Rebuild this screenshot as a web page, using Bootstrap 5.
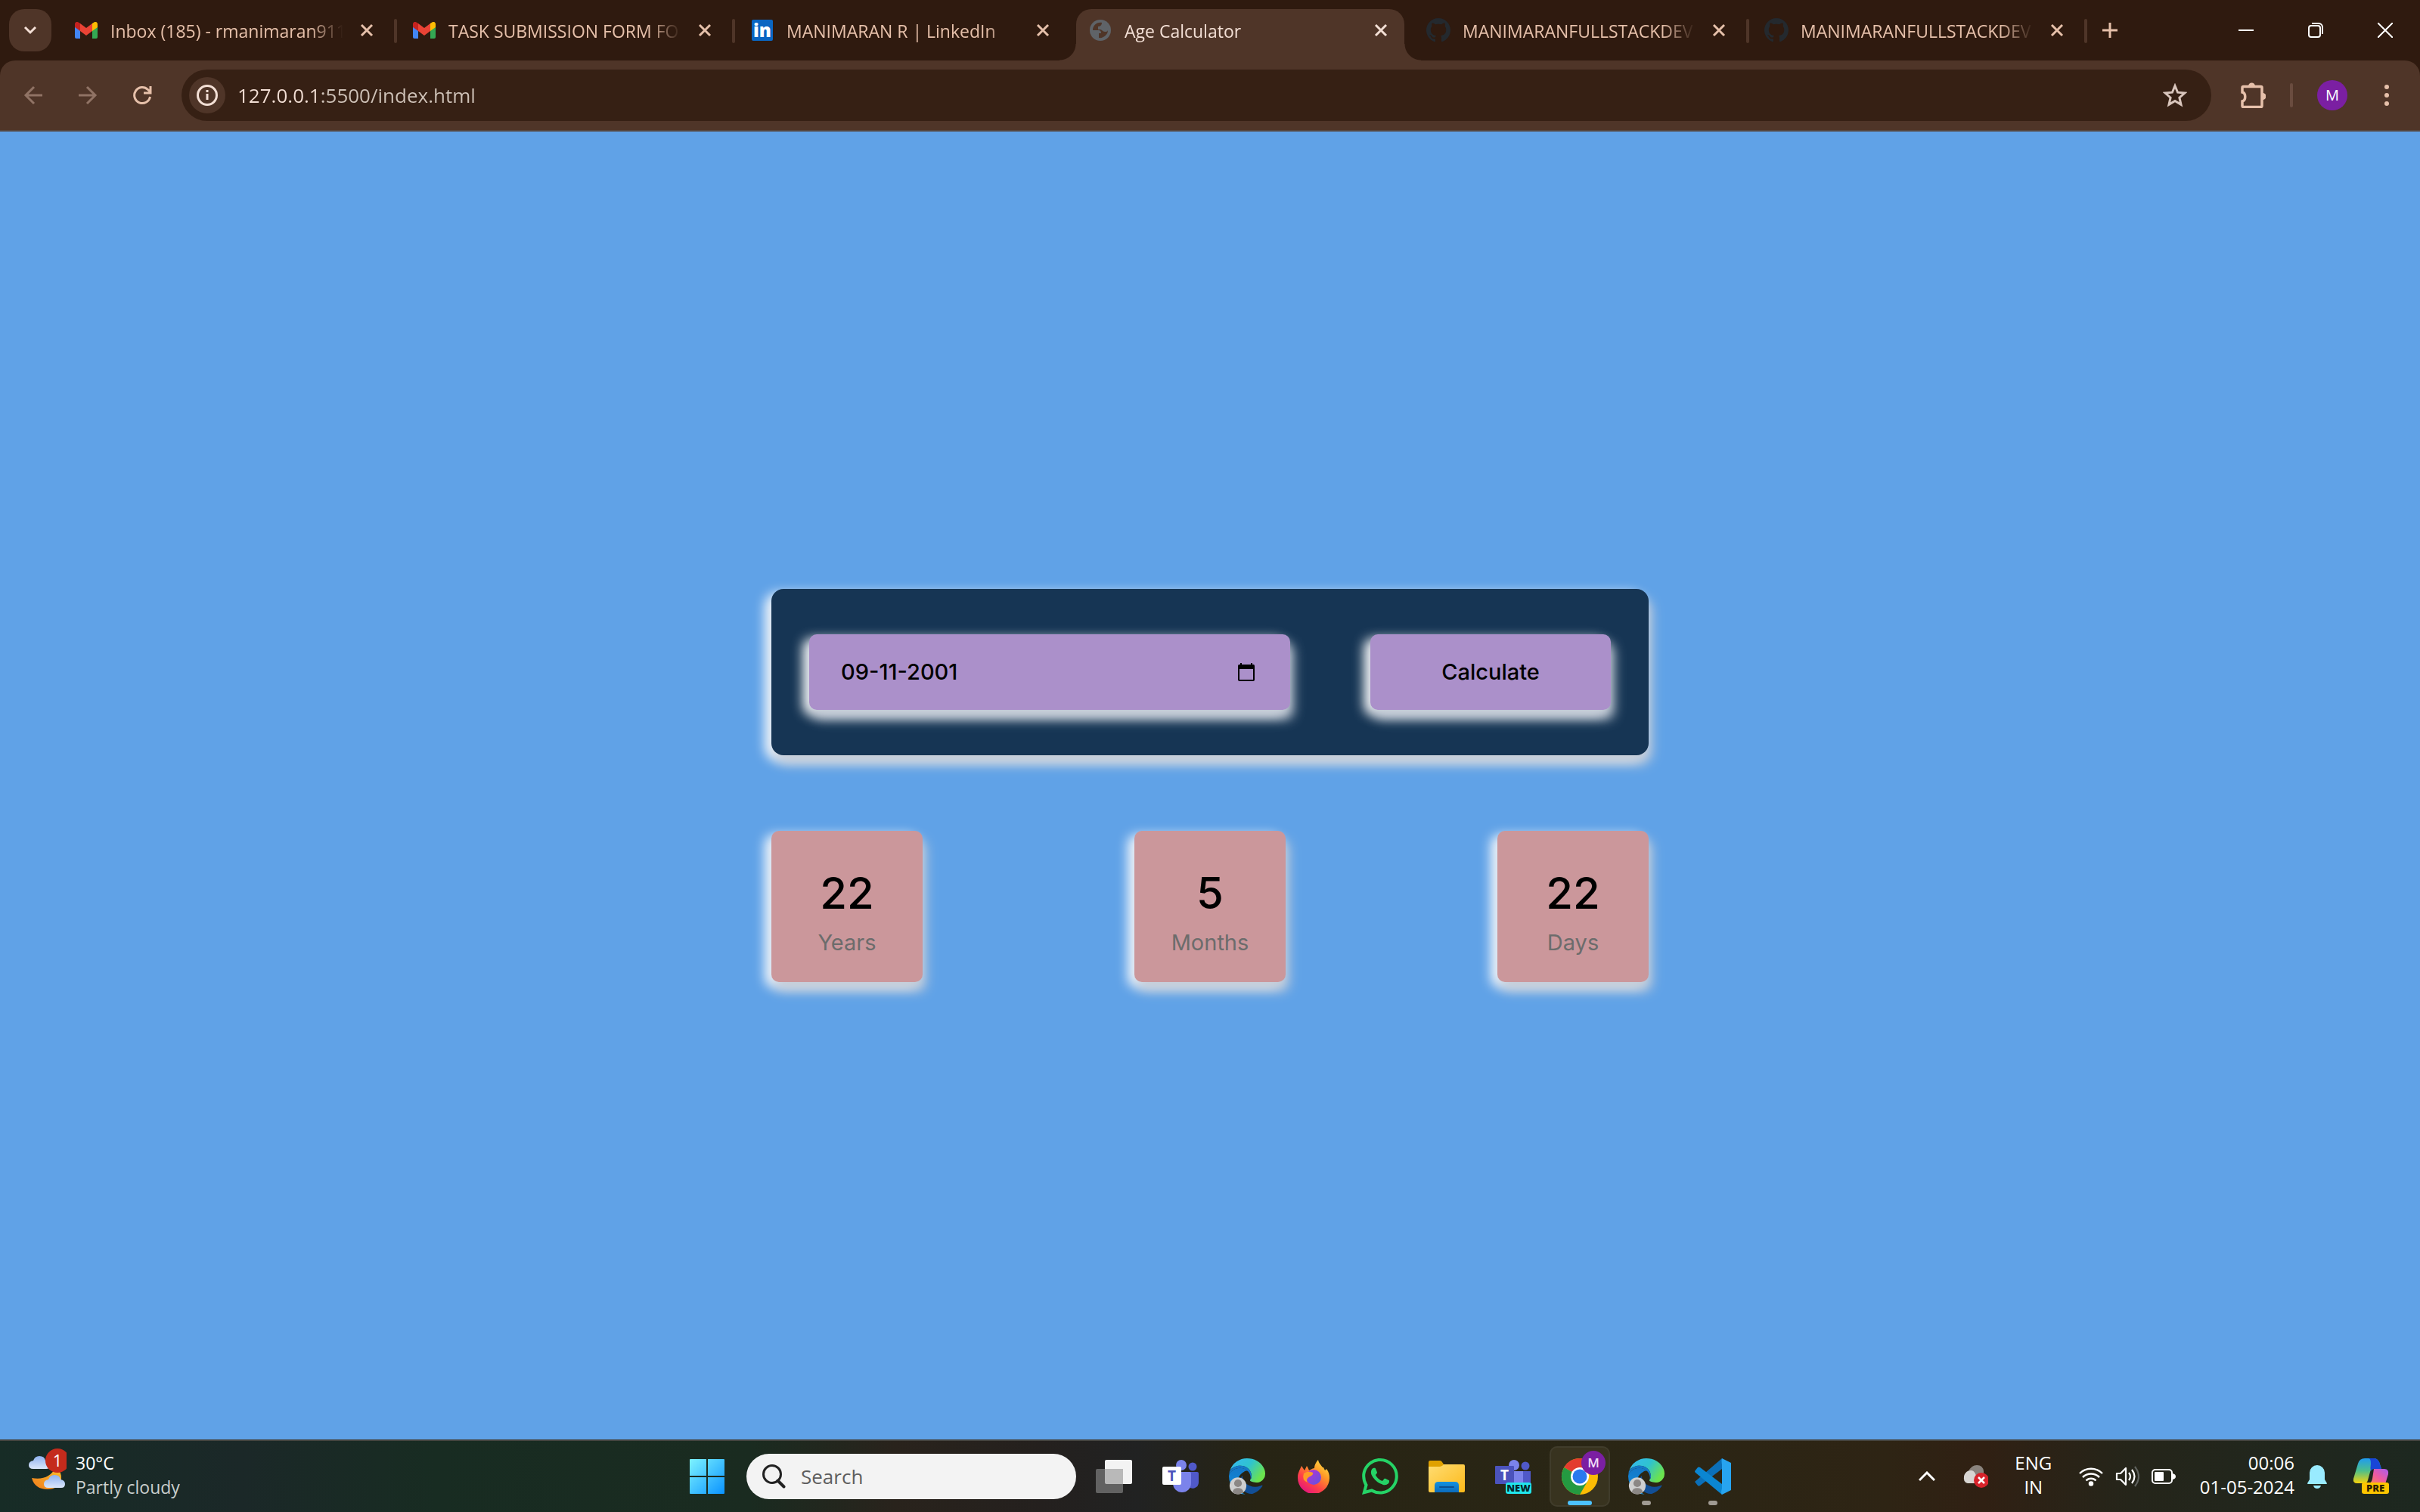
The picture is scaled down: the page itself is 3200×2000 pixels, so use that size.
<!DOCTYPE html>
<html lang="en">
<head>
<meta charset="utf-8">
<meta name="viewport" content="width=device-width, initial-scale=1">
<title>Age Calculator</title>
<link rel="stylesheet" href="https://cdn.jsdelivr.net/npm/bootstrap@5.3.0/dist/css/bootstrap.min.css">
<style>
:root{--strip:#2f1a0f;--bar:#4f3528;--field:#362014;--peach:#e6c0aa;--cream:#f3dfd5;--lilac:#ab90ca;--navy:#163554}
body{font-family:"Open Sans","Noto Sans",sans-serif;background:#60a2e7;overflow:hidden}
button,a{color:inherit;text-decoration:none}
svg{display:block;flex:none}
.plain{background:none;border:0;padding:0}
.glow{box-shadow:4px 12px 16px #c5cdd8,-8px 6px 16px #fff}

/* tab strip */
.strip{background:var(--strip);color:var(--peach);height:80px;padding:0 26px 0 12px;font-size:23px}
.finder{width:56px;height:56px;border-radius:20px;background:var(--bar);color:var(--cream);margin-right:14px}
.tabs{gap:13px}
.page-tab{width:434px;height:56px;padding:0 16px;position:relative}
.page-tab .fav{width:32px}
.page-tab .title{width:314px;margin:0 16px;padding-top:2px;white-space:nowrap;overflow:hidden;-webkit-mask-image:linear-gradient(90deg,#000 84%,transparent 98%);mask-image:linear-gradient(90deg,#000 84%,transparent 98%);text-align:left}
.page-tab.split::after{content:"";position:absolute;right:-9px;top:13px;width:4px;height:32px;border-radius:2px;background:var(--bar)}
.page-tab.current{background:var(--bar);color:var(--cream);height:68px;padding-bottom:12px;border-radius:20px 20px 0 0}
.page-tab.current::before,.page-tab.current::after{content:"";position:absolute;bottom:0;width:22px;height:22px}
.page-tab.current::before{left:-22px;background:radial-gradient(circle at 0 0,transparent 21px,var(--bar) 22px)}
.page-tab.current::after{right:-22px;background:radial-gradient(circle at 100% 0,transparent 21px,var(--bar) 22px)}
.new-tab{margin-left:29px}
.win{gap:52px;color:#fff}
.win button{width:40px}

/* toolbar */
.toolwrap{background:var(--strip)}
.tools{background:var(--bar);color:var(--peach);height:94px;border-bottom:2px solid #554841;border-radius:20px 20px 0 0;padding:0 24px}
.tool-btn{width:40px}
.nav-keys{gap:32px;margin-right:32px}
.extras{gap:32px;margin-left:38px}
.omni{height:68px;border-radius:34px;background:var(--field);padding:0 32px 0 10px}
.site-info{width:48px;height:48px;border-radius:50%;background:var(--bar);color:var(--cream)}
.address{font-size:26px;color:transparent;caret-color:var(--cream);background:linear-gradient(90deg,var(--cream) 112px,#cfc2b8 112px);-webkit-background-clip:text;background-clip:text;border:0;outline:0;padding:0;margin-left:16px}
.rule{width:4px;height:32px;border-radius:2px;background:#6a4c3f}
.avatar{width:40px;height:40px;border-radius:50%;background:#7b1fa2;color:#fff;font-size:20px}

/* calculator */
.calc{width:100%;max-width:1160px;font-family:Inter,sans-serif;color:#000}
.entry{background:var(--navy);border-radius:16px;padding:60px 50px;margin-bottom:100px}
.pick{width:636px;height:100px;border-radius:10px;background:var(--lilac);padding:0 46px 0 42px}
.pick input{background:none;border:0;outline:0;padding:0;font-size:29px;font-weight:500;color:#000;min-width:0}
.go{width:318px;height:100px;border-radius:10px;background:var(--lilac);font-size:29px;font-weight:500}
.tile{width:200px;height:200px;border-radius:10px;background:#cb979b;padding-top:24px}
.tile .num{font-size:58px;font-weight:500;line-height:72px}
.tile .unit{font-size:29px;line-height:60px;color:#6c6c6c}

/* taskbar */
.dock{height:96px;border-top:2px solid #45443f;color:#fff;font-size:24px;line-height:32px;background:linear-gradient(90deg,#172c26 0,#1b2828 10%,#182c22 18%,#1a2b20 31%,#29231c 37%,#24201e 43%,#212222 47%,#272414 52%,#2a2615 66%,#2e2414 78%,#302013 82%,#25251a 88%,#1d2820 100%)}
.dock .side{flex:1 1 0}
.pair{padding-bottom:4px}
.weather{margin-left:36px;gap:12px;font-size:23px}
.weather .sky{color:#c9cfcd}
.apps{gap:8px}
.apps .app{width:80px;height:80px;border-radius:10px;position:relative}
.app.open{background:#38331f;box-shadow:inset 0 0 0 2px #403c2b}
.app.live::after,.app.open::after{content:"";position:absolute;bottom:2px;left:50%;transform:translateX(-50%);width:12px;height:6px;border-radius:3px;background:#a09b93}
.app.open::after{width:32px;background:#4cc2ff}
.seek{width:436px;height:60px;border-radius:30px;background:#f3f3f3;margin:0 2px 0 4px;padding:0 20px}
.seek input{background:none;border:0;outline:0;padding:0;margin-left:20px;font-size:26px;min-width:0;color:#333}
.seek input::placeholder{color:#5e5e5e;opacity:1}
.tray{padding-right:40px}
.lang{width:60px;margin:0 30px}
</style>
<script src="https://cdn.jsdelivr.net/npm/bootstrap@5.3.0/dist/js/bootstrap.bundle.min.js"></script>
</head>
<body class="vh-100 d-flex flex-column">

<svg width="0" height="0" class="position-absolute" aria-hidden="true">
  <defs>
    <linearGradient id="edgeTop" x1="0" y1="0" x2="1" y2=".5"><stop offset="0" stop-color="#36b8f2"/><stop offset=".55" stop-color="#2fc3cf"/><stop offset="1" stop-color="#6be34e"/></linearGradient>
    <linearGradient id="edgeMid" x1="0" y1="0" x2="0" y2="1"><stop offset="0" stop-color="#1478c8"/><stop offset="1" stop-color="#0f8fe0"/></linearGradient>
    <linearGradient id="win" x1="0" y1="0" x2="1" y2="1"><stop offset="0" stop-color="#7df3ff"/><stop offset="1" stop-color="#0a93ff"/></linearGradient>
    <linearGradient id="cloud" x1="0" y1="0" x2="0" y2="1"><stop offset="0" stop-color="#8fb2f0"/><stop offset="1" stop-color="#dbe7fb"/></linearGradient>
    <linearGradient id="moon" x1="1" y1="0" x2="0" y2="1"><stop offset="0" stop-color="#fbc02d"/><stop offset="1" stop-color="#f07c1c"/></linearGradient>
    <linearGradient id="fox" x1="1" y1="0" x2=".3" y2="1"><stop offset="0" stop-color="#fff44f"/><stop offset=".4" stop-color="#ff9a27"/><stop offset=".72" stop-color="#ff4246"/><stop offset="1" stop-color="#e4167c"/></linearGradient>
    <linearGradient id="foxIn" x1="0" y1="0" x2="1" y2="1"><stop offset="0" stop-color="#c22fd0"/><stop offset="1" stop-color="#5b55e0"/></linearGradient>
    <linearGradient id="fold" x1="0" y1="0" x2="1" y2="1"><stop offset="0" stop-color="#ffdd73"/><stop offset="1" stop-color="#fcb919"/></linearGradient>
    <linearGradient id="foldIn" x1="0" y1="0" x2="0" y2="1"><stop offset="0" stop-color="#1592e0"/><stop offset="1" stop-color="#0b6bbd"/></linearGradient>
    <linearGradient id="copA" x1="0" y1="0" x2="0" y2="1"><stop offset="0" stop-color="#1f9bf0"/><stop offset=".5" stop-color="#4dbf8a"/><stop offset="1" stop-color="#f5d20c"/></linearGradient>
    <linearGradient id="copB" x1="1" y1="0" x2="0" y2="1"><stop offset="0" stop-color="#a95cf0"/><stop offset=".5" stop-color="#ee5aa0"/><stop offset="1" stop-color="#ff8a4c"/></linearGradient>
    <symbol id="gmail" viewBox="0 0 30 22">
      <path d="M0 3v17a2 2 0 0 0 2 2h5V9z" fill="#4285f4"/><path d="M30 3v17a2 2 0 0 1-2 2h-5V9z" fill="#34a853"/>
      <path d="M7 2v10L0 7V3C0 .2 3-1 5 .8z" fill="#c5221f"/><path d="M23 2v10l7-5V3c0-2.800-3-4-5-2.200z" fill="#fbbc04"/><path d="M7 2l8 6 8-6v10l-8 6-8-6z" fill="#ea4335"/>
    </symbol>
    <symbol id="x" viewBox="0 0 18 18"><path d="M2 2l14 14M16 2L2 16" stroke="currentColor" stroke-width="3" fill="none"/></symbol>
    <symbol id="github" viewBox="0 0 16 16"><path fill="#24292e" d="M8 0C3.580 0 0 3.580 0 8c0 3.540 2.290 6.530 5.470 7.590.4.070.55-.17.55-.38 0-.19-.01-.82-.01-1.490-2.010.37-2.530-.49-2.690-.94-.09-.23-.48-.94-.82-1.130-.28-.15-.68-.52-.01-.53.63-.01 1.080.58 1.230.82.72 1.210 1.870.87 2.330.66.07-.52.28-.87.51-1.070-1.780-.2-3.640-.89-3.640-3.950 0-.87.31-1.590.82-2.150-.08-.2-.36-1.020.08-2.120 0 0 .67-.21 2.200.82.64-.18 1.320-.27 2-.27s1.360.09 2 .27c1.530-1.040 2.200-.82 2.200-.82.44 1.100.16 1.920.08 2.120.51.56.82 1.270.82 2.150 0 3.070-1.870 3.750-3.650 3.950.29.25.54.73.54 1.480 0 1.070-.01 1.930-.01 2.200 0 .21.15.46.55.38A8.010 8.010 0 0 0 16 8c0-4.420-3.580-8-8-8"/></symbol>
    <symbol id="edge" viewBox="0 0 16 16">
      <path fill="url(#edgeTop)" d="M9.482 9.341c-.069.062-.17.153-.17.309 0 .162.107.325.3.456.877.613 2.521.54 2.592.538h.002c.667 0 1.320-.18 1.894-.519A3.840 3.840 0 0 0 16 6.819c.018-1.316-.44-2.218-.666-2.664l-.04-.08C13.963 1.487 11.106 0 8 0A8 8 0 0 0 .473 5.290C1.488 4.048 3.183 3.262 5 3.262c2.830 0 5.010 1.885 5.010 4.797h-.004v.002c0 .338-.168.832-.487 1.244z"/>
      <path fill="url(#edgeMid)" d="M.01 7.753a8.140 8.140 0 0 0 .753 3.641 8 8 0 0 0 6.495 4.564 5 5 0 0 1-.785-.377h-.01l-.12-.075a5.500 5.500 0 0 1-1.560-1.463A5.543 5.543 0 0 1 6.810 5.800l.01-.004.025-.012c.208-.098.62-.292 1.167-.285q.194.001.384.033a4 4 0 0 0-.993-.698l-.01-.005C6.348 4.282 5.199 4.263 5 4.263c-2.440 0-4.824 1.634-4.990 3.490"/>
      <path fill="#1478c8" d="M.3 5.700C1.500 4 3.200 3.200 5 3.262c2.830 0 5.010 1.885 5.010 4.797 0 .3-.2.8-.5 1.200C10 7.500 8.500 4.300 5 4.263 2.560 4.263.2 5.900.01 7.753z"/>
      <path fill="#124f96" d="M10.228 15.667a5 5 0 0 0 .303-.086l.082-.025a8.020 8.020 0 0 0 4.162-3.300.25.25 0 0 0-.331-.35q-.322.168-.663.294a6.400 6.400 0 0 1-2.243.4c-2.957 0-5.532-2.031-5.532-4.644q.003-.203.046-.399a4.540 4.540 0 0 0-.46 5.898l.003.005c.315.441.707.821 1.158 1.121h.003l.144.09c.877.55 1.721 1.078 3.328.996"/>
      <circle cx="4" cy="12.100" r="3.700" fill="#cfcfcf"/><circle cx="4" cy="11" r="1.700" fill="#8b8785"/><path d="M1.600 14.900Q2 13.100 4 13.100t2.400 1.800Q4 16.700 1.600 14.900z" fill="#8b8785"/>
    </symbol>
  </defs>
</svg>

<header>
  <div class="strip d-flex align-items-center">
    <button class="plain finder d-flex align-items-center justify-content-center" aria-label="Search tabs">
      <svg width="18" height="12" viewBox="0 0 18 12"><path d="M2 2l7 7 7-7" fill="none" stroke="currentColor" stroke-width="3"/></svg>
    </button>
    <nav class="tabs d-flex align-self-stretch align-items-center" aria-label="Tabs">
      <div class="page-tab split d-flex align-items-center">
        <span class="fav d-flex justify-content-center"><svg width="30" height="22"><use href="#gmail"/></svg></span>
        <a class="title" href="#">Inbox (185) - rmanimaran911</a>
        <button class="plain" aria-label="Close tab"><svg width="18" height="18"><use href="#x"/></svg></button>
      </div>
      <div class="page-tab split d-flex align-items-center">
        <span class="fav d-flex justify-content-center"><svg width="30" height="22"><use href="#gmail"/></svg></span>
        <a class="title" href="#">TASK SUBMISSION FORM FO</a>
        <button class="plain" aria-label="Close tab"><svg width="18" height="18"><use href="#x"/></svg></button>
      </div>
      <div class="page-tab d-flex align-items-center">
        <span class="fav d-flex justify-content-center"><svg width="28" height="28" viewBox="0 0 28 28"><rect width="28" height="28" rx="2" fill="#0a66c2"/><text x="14" y="23" text-anchor="middle" font-family="Open Sans" font-weight="800" font-size="24" fill="#fff">in</text></svg></span>
        <a class="title" href="#">MANIMARAN R | LinkedIn</a>
        <button class="plain" aria-label="Close tab"><svg width="18" height="18"><use href="#x"/></svg></button>
      </div>
      <div class="page-tab current align-self-end d-flex align-items-center">
        <span class="fav d-flex justify-content-center"><svg width="28" height="28" viewBox="0 0 28 28"><circle cx="14" cy="14" r="14" fill="#5f6368"/><path d="M16 4c-7-1-12 4-12 10h7c3 0 4 1 4 4h-3v6c6 1 12-4 12-10-1 2-2 2-4 2-3 0-4-3-6-3h-3V9c3 0 5-2 5-5z" fill="#4f3528"/></svg></span>
        <a class="title" href="#" aria-current="page">Age Calculator</a>
        <button class="plain" aria-label="Close tab"><svg width="18" height="18"><use href="#x"/></svg></button>
      </div>
      <div class="page-tab split d-flex align-items-center">
        <span class="fav"><svg width="32" height="32"><use href="#github"/></svg></span>
        <a class="title" href="#">MANIMARANFULLSTACKDEV</a>
        <button class="plain" aria-label="Close tab"><svg width="18" height="18"><use href="#x"/></svg></button>
      </div>
      <div class="page-tab split d-flex align-items-center">
        <span class="fav"><svg width="32" height="32"><use href="#github"/></svg></span>
        <a class="title" href="#">MANIMARANFULLSTACKDEV</a>
        <button class="plain" aria-label="Close tab"><svg width="18" height="18"><use href="#x"/></svg></button>
      </div>
    </nav>
    <button class="plain new-tab" aria-label="New tab"><svg width="20" height="20" viewBox="0 0 20 20"><path d="M10 0v20M0 10h20" stroke="currentColor" stroke-width="3"/></svg></button>
    <div class="win d-flex align-items-center ms-auto">
      <button class="plain d-flex justify-content-center" aria-label="Minimise"><svg width="20" height="20" viewBox="0 0 20 20"><path d="M0 10h20" stroke="currentColor" stroke-width="2"/></svg></button>
      <button class="plain d-flex justify-content-center" aria-label="Restore"><svg width="20" height="20" viewBox="0 0 20 20" fill="none" stroke="currentColor" stroke-width="2"><rect x="1" y="4" width="15" height="15" rx="3"/><path d="M5 1h9a5 5 0 0 1 5 5v9"/></svg></button>
      <button class="plain d-flex justify-content-center" aria-label="Close window"><svg width="20" height="20" viewBox="0 0 20 20"><path d="M0 0l20 20M20 0L0 20" stroke="currentColor" stroke-width="2"/></svg></button>
    </div>
  </div>
  <div class="toolwrap">
    <div class="tools d-flex align-items-center">
      <div class="nav-keys d-flex">
        <button class="plain tool-btn d-flex justify-content-center" aria-label="Back" disabled><svg width="26" height="26" viewBox="0 0 26 26" fill="none" stroke="#907365" stroke-width="3"><path d="M25 13H3M14 2L3 13l11 11"/></svg></button>
        <button class="plain tool-btn d-flex justify-content-center" aria-label="Forward" disabled><svg width="26" height="26" viewBox="0 0 26 26" fill="none" stroke="#907365" stroke-width="3"><path d="M1 13h22M12 2l11 11-11 11"/></svg></button>
        <button class="plain tool-btn d-flex justify-content-center" aria-label="Reload"><svg width="26" height="26" viewBox="0 0 26 26" fill="none" stroke="currentColor" stroke-width="3"><path d="M23.500 15A10.500 10.500 0 1 1 20.500 5.500L23 8M24 1v9h-9"/></svg></button>
      </div>
      <div class="omni flex-grow-1 d-flex align-items-center">
        <button class="plain site-info d-flex align-items-center justify-content-center" aria-label="Site information"><svg width="28" height="28" viewBox="0 0 28 28"><circle cx="14" cy="14" r="12.500" fill="none" stroke="currentColor" stroke-width="3"/><path d="M14 12v8M14 7v3" stroke="currentColor" stroke-width="3"/></svg></button>
        <input class="address flex-grow-1" type="text" value="127.0.0.1:5500/index.html" aria-label="Address">
        <button class="plain" aria-label="Bookmark"><svg width="32" height="32" viewBox="0 0 32 32"><path d="M16 3.500l3.600 8.700 9.400.8-7.100 6.200 2.100 9.200-8-4.900-8 4.900 2.100-9.200L3 13l9.400-.8z" fill="none" stroke="#d9c5bc" stroke-width="3"/></svg></button>
      </div>
      <div class="extras d-flex align-items-center">
        <button class="plain" aria-label="Extensions"><svg width="34" height="34" viewBox="0 0 34 34"><path d="M3 7q0-1.500 1.500-1.500h23q1.500 0 1.500 1.500v24q0 1.500-1.500 1.500h-23Q3 32.500 3 31v-6c5-1 5-11 0-12z" fill="none" stroke="currentColor" stroke-width="3.500"/><path d="M11 5a4.500 4.500 0 0 1 9 0zM30 14a4.500 4.500 0 0 1 0 9z" fill="currentColor"/></svg></button>
        <span class="rule"></span>
        <button class="plain avatar" aria-label="Profile">M</button>
        <button class="plain tool-btn d-flex justify-content-center" aria-label="Menu"><svg width="8" height="28" viewBox="0 0 8 28" fill="currentColor"><circle cx="4" cy="3" r="3"/><circle cx="4" cy="14" r="3"/><circle cx="4" cy="25" r="3"/></svg></button>
      </div>
    </div>
  </div>
</header>

<main class="flex-grow-1 d-flex align-items-center justify-content-center">
  <div class="calc">
    <form class="entry glow d-flex justify-content-between">
      <div class="pick glow d-flex align-items-center">
        <input class="flex-grow-1" type="text" value="09-11-2001" aria-label="Date of birth">
        <button type="button" class="plain" aria-label="Open calendar"><svg width="24" height="24" viewBox="0 0 24 24"><path d="M4 0h2v2h12V0h2v2h1.500Q23 2 23 4v18q0 2-2 2H3q-2 0-2-2V4q0-2 1.500-2H4zM3 8v14h18V8z" fill="#000"/></svg></button>
      </div>
      <button type="button" class="plain go glow">Calculate</button>
    </form>
    <div class="d-flex justify-content-between text-center">
      <div class="tile glow d-flex flex-column justify-content-center"><div class="num">22</div><div class="unit">Years</div></div>
      <div class="tile glow d-flex flex-column justify-content-center"><div class="num">5</div><div class="unit">Months</div></div>
      <div class="tile glow d-flex flex-column justify-content-center"><div class="num">22</div><div class="unit">Days</div></div>
    </div>
  </div>
</main>

<footer class="dock d-flex align-items-center">
  <div class="side">
    <div class="weather d-flex align-items-center">
      <svg width="52" height="78" viewBox="0 0 52 78">
        <path d="M8 29q-6 0-6-5t6-6q2-6 8-6 7 0 8 6 6 1 6 6t-5 5z" fill="url(#cloud)"/>
        <path d="M6 41q22 4 32-14 8 6 7 16-4 13-18 13Q10 56 6 41z" fill="url(#moon)"/>
        <path d="M28 54q-6 0-6-5t6-6q2-6 8-6 7 0 8 6 6 1 6 6t-5 5z" fill="url(#cloud)"/>
        <circle cx="40" cy="18" r="16" fill="#c42b1c"/><text x="40" y="26" text-anchor="middle" font-size="22" fill="#fff">1</text>
      </svg>
      <div class="pair"><div>30°C</div><div class="sky">Partly cloudy</div></div>
    </div>
  </div>
  <nav class="apps d-flex align-items-center" aria-label="Apps">
    <button class="plain app d-flex align-items-center justify-content-center" aria-label="Start"><svg width="46" height="46" viewBox="0 0 46 46"><path d="M0 1q0-1 1-1h21v22H0zM24 0h21q1 0 1 1v21H24zM0 24h22v22H1q-1 0-1-1zM24 24h22v21q0 1-1 1H24z" fill="url(#win)"/></svg></button>
    <label class="seek d-flex align-items-center"><svg width="32" height="32" viewBox="0 0 32 32" fill="none" stroke="#222" stroke-width="3"><circle cx="14" cy="13" r="11.500"/><path d="M21.500 21.500l8 8" stroke-width="4" stroke-linecap="round"/></svg><input class="flex-grow-1" type="text" placeholder="Search" aria-label="Search"></label>
    <button class="plain app d-flex align-items-center justify-content-center" aria-label="Task view"><svg width="48" height="44" viewBox="0 0 48 44"><rect x="12" width="36" height="32" rx="2" fill="#f3f3f3"/><rect y="12" width="36" height="32" rx="2" fill="#626262"/><path d="M12 12h24v20H14q-2 0-2-2z" fill="#b9b9b9"/></svg></button>
    <button class="plain app d-flex align-items-center justify-content-center" aria-label="Teams"><svg width="48" height="44" viewBox="0 0 48 44"><circle cx="40" cy="9" r="5.500" fill="#5059c9"/><path d="M34 16h12q2 0 2 2v12a8 8 0 0 1-14 5z" fill="#5059c9"/><circle cx="25" cy="7" r="7" fill="#7b83eb"/><path d="M14 16h22q2 0 2 2v13a12 12 0 0 1-24 0z" fill="#7b83eb"/><rect y="9" width="25" height="24" rx="2" fill="#fff"/><text x="12.500" y="28" text-anchor="middle" font-weight="700" font-size="19" fill="#4b53bc">T</text></svg></button>
    <button class="plain app d-flex align-items-center justify-content-center" aria-label="Edge"><svg width="48" height="48"><use href="#edge"/></svg></button>
    <button class="plain app d-flex align-items-center justify-content-center" aria-label="Firefox"><svg width="42" height="44" viewBox="0 0 42 44"><path d="M0 23C0 17 3 13 5 8l4 6 3-6q2 3 3 6 5-3 7-3c0-5 4-10 5-11 1 5 4 7 6 10l1 0 2 4 2-2q4 5 4 12a21 21 0 0 1-42 0z" fill="url(#fox)"/><circle cx="21" cy="23" r="10" fill="url(#foxIn)"/><path d="M8 18q6-4 12-1 1 3-4 5-6 3-3 8-8-3-5-12z" fill="#ff9a27"/></svg></button>
    <button class="plain app d-flex align-items-center justify-content-center" aria-label="WhatsApp"><svg width="48" height="48" viewBox="0 0 16 16"><path fill="#25d366" d="M13.601 2.326A7.850 7.850 0 0 0 7.994 0C3.627 0 .068 3.558.064 7.926c0 1.399.366 2.760 1.057 3.965L0 16l4.204-1.102a7.900 7.900 0 0 0 3.790.965h.004c4.368 0 7.926-3.558 7.930-7.930A7.900 7.900 0 0 0 13.600 2.326zM7.994 14.521a6.600 6.600 0 0 1-3.356-.92l-.24-.144-2.494.654.666-2.433-.156-.251a6.560 6.560 0 0 1-1.007-3.505c0-3.626 2.957-6.584 6.591-6.584a6.560 6.560 0 0 1 4.660 1.931 6.560 6.560 0 0 1 1.928 4.660c-.004 3.639-2.961 6.592-6.592 6.592m3.615-4.934c-.197-.099-1.170-.578-1.353-.646-.182-.065-.315-.099-.445.099-.133.197-.513.646-.627.775-.114.133-.232.148-.43.050-.197-.1-.836-.308-1.592-.985-.59-.525-.985-1.175-1.103-1.372-.114-.198-.011-.304.088-.403.087-.088.197-.232.296-.346.1-.114.133-.198.198-.33.065-.134.034-.248-.015-.347-.05-.099-.445-1.076-.612-1.470-.16-.389-.323-.335-.445-.34-.114-.007-.247-.007-.38-.007a.73.73 0 0 0-.529.247c-.182.198-.691.677-.691 1.654s.71 1.916.81 2.049c.098.133 1.394 2.132 3.383 2.992.47.205.84.326 1.129.418.475.152.904.129 1.246.08.38-.058 1.171-.48 1.338-.943.164-.464.164-.86.114-.943-.049-.084-.182-.133-.38-.232z"/></svg></button>
    <button class="plain app d-flex align-items-center justify-content-center" aria-label="File Explorer"><svg width="48" height="42" viewBox="0 0 48 42"><path d="M0 2q0-2 2-2h13q2 0 3 2l2 3v8H0z" fill="#e0a100"/><path d="M0 8h15q3 0 5-3h26q2 0 2 2v33q0 2-2 2H2q-2 0-2-2z" fill="url(#fold)"/><path d="M8 42V33q0-5 5-5h22q5 0 5 5v9z" fill="url(#foldIn)"/><path d="M15 35h18" stroke="#0d4f8f" stroke-width="2" stroke-linecap="round"/></svg></button>
    <button class="plain app d-flex align-items-center justify-content-center" aria-label="Teams (new)"><svg width="48" height="46" viewBox="0 0 48 46"><circle cx="40" cy="9" r="5.500" fill="#5059c9"/><path d="M36 16h11v20H36z" fill="#5059c9"/><circle cx="25" cy="8" r="7" fill="#7b83eb"/><path d="M14 16h23v18H14z" fill="#7b83eb"/><rect y="9" width="25" height="24" rx="1" fill="#4b53bc"/><text x="12.500" y="28" text-anchor="middle" font-weight="700" font-size="19" fill="#fff">T</text><rect x="14" y="31" width="34" height="15" rx="3" fill="#21e6ec"/><text x="31" y="43" text-anchor="middle" font-weight="800" font-size="13" fill="#06272a">NEW</text></svg></button>
    <button class="plain app open d-flex align-items-center justify-content-center" aria-label="Chrome"><svg width="68" height="68" viewBox="-2 -2 68 68"><circle cx="32" cy="32" r="24" fill="#fbbc04"/><path d="M32 32L11.200 20A24 24 0 0 1 52.800 20z" fill="#e33b2e"/><path d="M11.200 20A24 24 0 0 0 32 56l11-19-11-5z" fill="#249a41"/><circle cx="32" cy="32" r="12" fill="#fff"/><circle cx="32" cy="32" r="9.500" fill="#2a79ee"/><circle cx="50" cy="14" r="16" fill="#7b1fa2"/><text x="50" y="20" text-anchor="middle" font-weight="600" font-size="17" fill="#f0dcf6">M</text></svg></button>
    <button class="plain app live d-flex align-items-center justify-content-center" aria-label="Edge profile"><svg width="48" height="48"><use href="#edge"/></svg></button>
    <button class="plain app live d-flex align-items-center justify-content-center" aria-label="Visual Studio Code"><svg width="48" height="48" viewBox="0 0 48 48"><path d="M0 31l4 5q1 1 3 0L36 14V0z" fill="#0b6fb8"/><path d="M0 17l4-5q1-1 3 0l29 22v14L1 19q-1-1-1-2z" fill="#0b86d2"/><path d="M36 0l12 6v36l-12 6q-2-2 0-8V8q-1-5 0-8z" fill="#27a4f0"/></svg></button>
  </nav>
  <div class="side">
    <div class="tray d-flex align-items-center justify-content-end">
      <button class="plain" aria-label="Hidden icons"><svg width="22" height="14" viewBox="0 0 22 14"><path d="M1 12L11 2l10 10" fill="none" stroke="#fff" stroke-width="3"/></svg></button>
      <svg class="ms-4" width="46" height="30" viewBox="-14 0 46 30"><path d="M4 24q-5-1-4-9 1-5 6-7 4-8 11-8 8 0 9 8v16z" fill="#8a837d"/><path d="M5 24q-6-2-5-9 2-8 9-8 8 0 8 17z" fill="#d8d5d2"/><circle cx="23" cy="20" r="10" fill="#d8232b"/><path d="M19 16l8 8M27 16l-8 8" stroke="#fff" stroke-width="2.500"/></svg>
      <div class="lang pair text-center"><div>ENG</div><div>IN</div></div>
      <div class="d-flex align-items-center gap-3">
        <svg width="32" height="26" viewBox="0 0 32 26" fill="none" stroke="#fff" stroke-width="2.500"><path d="M1 9a21 21 0 0 1 30 0M5 14a15.500 15.500 0 0 1 22 0M9.500 18.500a9 9 0 0 1 13 0"/><circle cx="16" cy="22.500" r="2" fill="#fff"/></svg>
        <svg width="32" height="30" viewBox="0 0 32 30" fill="none" stroke="#fff" stroke-width="2.200"><path d="M2 11h5l7-7v22l-7-7H2z" stroke-linejoin="round"/><path d="M18 10q4 5 0 10M22 6q7 9 0 18"/><path d="M26 2q10 13 0 26" stroke="#5f625e"/></svg>
        <svg width="32" height="20" viewBox="0 0 32 20"><rect x="1" y="1" width="26" height="18" rx="4" fill="none" stroke="#fff" stroke-width="2"/><rect x="4" y="4" width="12" height="12" rx="1" fill="#fff"/><path d="M28 6q4 1 4 4t-4 4z" fill="#fff"/></svg>
      </div>
      <div class="pair text-end ms-4 ps-2"><div>00:06</div><div>01-05-2024</div></div>
      <svg class="ms-3" width="28" height="32" viewBox="0 0 28 32" fill="#99ebff"><path d="M4 20V11a10 10 0 0 1 20 0v9l3 5q0 1-1 1H2q-1 0-1-1zM9 28h10q-1 4-5 4t-5-4z"/></svg>
      <svg class="ms-4" width="58" height="48" viewBox="-10 0 58 48"><path d="M6 7Q8 0 15 0h12q6 0 8 8l2 6H27q-4 0-5 4l-3 11q-1 4-5 4H5q-6 0-5-6z" fill="url(#copA)"/><path d="M20 0h7q6 0 8 8l2 6H27q-3 0-4 3-1-4 0-10 0-7-3-7z" fill="#1846d8"/><path d="M27 14h14q6 0 5 7l-4 13H18q6-1 7-7z" fill="url(#copB)"/><rect x="11" y="32" width="36" height="15" rx="3" fill="#fdc500"/><text x="29" y="44" text-anchor="middle" font-weight="800" font-size="13" fill="#2b2100">PRE</text></svg>
    </div>
  </div>
</footer>
</body>
</html>
